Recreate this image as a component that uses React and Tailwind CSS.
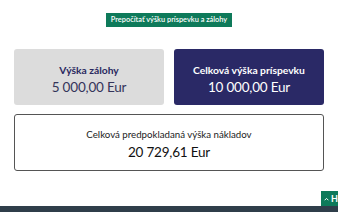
export default function App() {
  return (
    <div className="relative w-[338px] h-[212px] bg-white overflow-hidden font-['Lato',sans-serif]">
      <div className="flex flex-col items-center pt-[13px] px-[14px]">
        <button type="button" className="h-[14px] px-[5px] bg-[#0e7a5a] text-white text-[7.4px] leading-[14px] font-semibold">
          Prepočítať výšku príspevku a zálohy
        </button>

        <div className="w-full grid grid-cols-2 gap-[10px] mt-[22px]">
          <div className="h-[56px] rounded-[3px] bg-[#dcdcdc] flex flex-col items-center pt-[14px] gap-[1px]">
            <div className="text-[10.3px] leading-[14px] font-bold text-[#2a2960]">Výška zálohy</div>
            <div className="text-[13.5px] leading-[18px] tracking-[-0.2px] text-[#34345a]">5 000,00 Eur</div>
          </div>
          <div className="h-[56px] rounded-[3px] bg-[#2a2966] flex flex-col items-center pt-[14px] gap-[1px]">
            <div className="text-[10.3px] leading-[14px] font-bold text-white">Celková výška príspevku</div>
            <div className="text-[13.5px] leading-[18px] tracking-[-0.2px] text-white">10 000,00 Eur</div>
          </div>
        </div>

        <div className="w-full h-[57px] mt-[9px] rounded-[3px] border border-[#555] flex flex-col items-center pt-[12px] gap-[2px]">
          <div className="text-[9.7px] leading-[14px] text-[#222]">Celková predpokladaná výška nákladov</div>
          <div className="text-[13.5px] leading-[18px] tracking-[-0.2px] text-[#111]">20 729,61 Eur</div>
        </div>
      </div>

      <div className="absolute left-[321px] top-[191px] h-[15px] w-[30px] bg-[#0e7a5a] flex items-center pl-[3px] gap-[2px] text-white text-[9px] font-bold">
        <svg width="8" height="6" viewBox="0 0 8 6" fill="none" stroke="white" strokeWidth="1.6">
          <path d="M1 5 L4 2 L7 5" />
        </svg>
        <span>Hore</span>
      </div>

      <div className="absolute left-0 bottom-0 w-full h-[6px] bg-[#2f3e4a]" />
    </div>
  );
}
